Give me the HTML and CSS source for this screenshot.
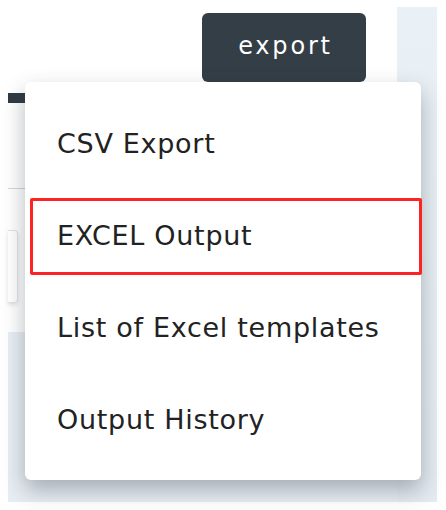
FILE: index.html
```html
<!DOCTYPE html>
<html lang="en">
<head>
<meta charset="utf-8">
<title>Export</title>
<link rel="stylesheet" href="styles.css">
</head>
<body>
<div class="page">
  <div class="card">
    <div class="toolbar">
      <button class="export-btn" type="button">export</button>
    </div>
    <div class="table-head"></div>
    <div class="row-line"></div>
    <div class="field"></div>
  </div>
  <div class="side"></div>
  <ul class="menu">
    <li class="menu-item">CSV Export</li>
    <li class="menu-item is-marked">EXCEL Output</li>
    <li class="menu-item">List of Excel templates</li>
    <li class="menu-item">Output History</li>
  </ul>
</div>
</body>
</html>
```
FILE: styles.css
```css
html, body {
  margin: 0;
  background: #ffffff;
}

.page {
  position: relative;
  display: flex;
  margin: 7px 9px 8px 8px;
  height: 495px;
  background: #e8eef3;
  font-family: "DejaVu Sans", "Open Sans", sans-serif;
}

.card {
  display: flex;
  flex-direction: column;
  width: 389px;
  height: 325px;
  background: #ffffff;
}

.side {
  flex: 1;
  background: linear-gradient(180deg, #eaf1f6 0%, #e4ebf1 100%);
}

.toolbar {
  display: flex;
  justify-content: flex-end;
  padding: 6px 31px 0 0;
}

.export-btn {
  width: 164px;
  height: 69px;
  border: 0;
  border-radius: 6px;
  background: #333e47;
  color: #ffffff;
  font-family: "DejaVu Sans", "Open Sans", sans-serif;
  font-size: 24px;
  letter-spacing: 2.8px;
  padding: 0 0 3px 3px;
}

.table-head {
  margin-top: 11px;
  height: 10px;
  background: #2f3a43;
}

.row-line {
  margin-top: 85px;
  height: 1px;
  background: #d4d7da;
}

.field {
  margin-top: 41px;
  width: 9px;
  height: 71px;
  border: 1px solid #e1e3e5;
  border-left: 0;
  border-radius: 0 4px 4px 0;
  box-shadow: 0 2px 4px rgba(0, 0, 0, 0.12);
}

.menu {
  position: absolute;
  left: 17px;
  top: 75px;
  box-sizing: border-box;
  width: 396px;
  height: 398px;
  margin: 0;
  padding: 14px 0;
  list-style: none;
  background: #ffffff;
  border-radius: 6px;
  box-shadow: 0 10px 22px rgba(40, 50, 60, 0.35);
}

.menu-item {
  position: relative;
  display: flex;
  align-items: center;
  height: 92px;
  padding-left: 32px;
  padding-top: 2px;
  box-sizing: border-box;
  font-size: 27px;
  letter-spacing: 0.7px;
  color: #222222;
}

.menu-item.is-marked::after {
  content: "";
  position: absolute;
  left: 5px;
  right: -1px;
  top: 10px;
  bottom: 5px;
  border: 3.5px solid #ff2222;
  border-radius: 2px;
}
```
